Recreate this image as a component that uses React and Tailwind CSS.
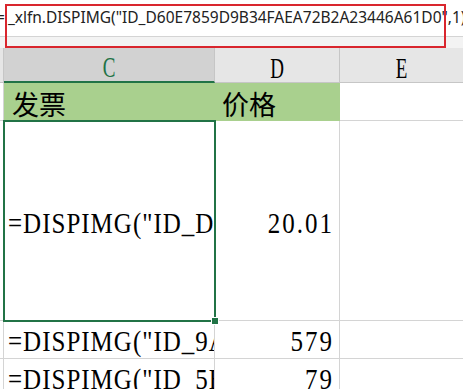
const SERIF = { fontFamily: '"Liberation Serif", "Noto Sans CJK SC", serif' }
const CJK = { fontFamily: '"Noto Sans CJK SC", sans-serif' }

function ColHeader({ label, selected, last }) {
  return (
    <div
      className={
        'flex items-end justify-center overflow-hidden ' +
        (selected
          ? 'bg-[#d2d2d2] border-b-2 border-b-[#217346] border-r border-r-[#c6c6c6]'
          : 'bg-[#e6e6e6] border-b border-b-[#c6c6c6] ' + (last ? '' : 'border-r border-r-[#c6c6c6]'))
      }
    >
      <span
        className={
          'inline-block text-[19px] leading-none scale-y-150 origin-bottom ' +
          (selected ? 'text-[#217346]' : 'text-black')
        }
        style={SERIF}
      >
        {label}
      </span>
    </div>
  )
}

function DataText({ children, num }) {
  return (
    <span
      className={
        'inline-block text-[25px] leading-none scale-y-[1.2] origin-bottom text-black whitespace-nowrap ' +
        (num ? 'tracking-[2px]' : 'tracking-[1px]')
      }
      style={SERIF}
    >
      {children}
    </span>
  )
}

export default function App() {
  return (
    <div className="relative w-[463px] h-[389px] overflow-hidden bg-white">
      {/* formula bar */}
      <div
        className="h-[37px] bg-white border-b border-[#d4d4d4] flex items-center overflow-hidden whitespace-nowrap text-[15.5px] text-[#222]"
        style={{ fontFamily: '"Noto Sans", "Open Sans", sans-serif' }}
      >
        <span className="-ml-[4px]">=</span>
        <span className="ml-[3px]">_xlfn.DISPIMG("ID_D60E7859D9B34FAEA72B2A23446A61D0",1)</span>
      </div>
      <div className="h-[11px] bg-[#f3f3f3]" />

      {/* grid */}
      <div className="grid grid-cols-[4px_211px_125px_1fr] grid-rows-[35px_38px_200px_38px_38px]">
        {/* column headers */}
        <div className="bg-[#e6e6e6] border-r border-[#c6c6c6] border-b border-b-[#c6c6c6]" />
        <ColHeader label="C" selected />
        <ColHeader label="D" />
        <ColHeader label="E" last />

        {/* row 1 */}
        <div className="border-r border-b border-[#d4d4d4]" />
        <div className="bg-[#a9d08e] flex items-start pt-[7px] pl-[8px]">
          <span className="text-[27px] leading-none text-black" style={CJK}>
            发票
          </span>
        </div>
        <div className="bg-[#a9d08e] flex items-start pt-[7px] pl-[7px]">
          <span className="text-[27px] leading-none text-black" style={CJK}>
            价格
          </span>
        </div>
        <div className="border-b border-[#d4d4d4]" />

        {/* row 2 */}
        <div className="border-r border-b border-[#d4d4d4]" />
        <div className="border-r border-b border-[#d4d4d4] flex items-center pt-[10px] pl-[4px] overflow-hidden">
          <DataText>=DISPIMG("ID_D60E7859D9B34FAEA72B2A23446A61D0",1)</DataText>
        </div>
        <div className="border-r border-b border-[#d4d4d4] flex items-center justify-end pt-[10px] pr-[5px]">
          <DataText num>20.01</DataText>
        </div>
        <div className="border-b border-[#d4d4d4]" />

        {/* row 3 */}
        <div className="border-r border-b border-[#d4d4d4]" />
        <div className="border-r border-b border-[#d4d4d4] flex items-end pb-[2px] pl-[4px] overflow-hidden">
          <DataText>=DISPIMG("ID_9A1C37E2B04F4D1E8C6A2B7F0E9D1C45",1)</DataText>
        </div>
        <div className="border-r border-b border-[#d4d4d4] flex items-end justify-end pb-[2px] pr-[5px]">
          <DataText num>579</DataText>
        </div>
        <div className="border-b border-[#d4d4d4]" />

        {/* row 4 */}
        <div className="border-r border-b border-[#d4d4d4]" />
        <div className="border-r border-b border-[#d4d4d4] flex items-end pb-[2px] pl-[4px] overflow-hidden">
          <DataText>=DISPIMG("ID_5B2E64F1A7C34E0B9D8F1A6C3E7B2D90",1)</DataText>
        </div>
        <div className="border-r border-b border-[#d4d4d4] flex items-end justify-end pb-[2px] pr-[5px]">
          <DataText num>79</DataText>
        </div>
        <div className="border-b border-[#d4d4d4]" />
      </div>

      {/* selection box and fill handle */}
      <div className="absolute left-[3px] top-[120px] w-[213px] h-[202px] border-2 border-[#217346] pointer-events-none" />
      <div className="absolute left-[211px] top-[317px] w-[6px] h-[6px] bg-[#217346] border border-white box-content" />

      {/* red annotation box */}
      <div className="absolute left-[5px] top-[4px] w-[441px] h-[44px] border-2 border-[#d9262e] pointer-events-none" />
    </div>
  )
}
